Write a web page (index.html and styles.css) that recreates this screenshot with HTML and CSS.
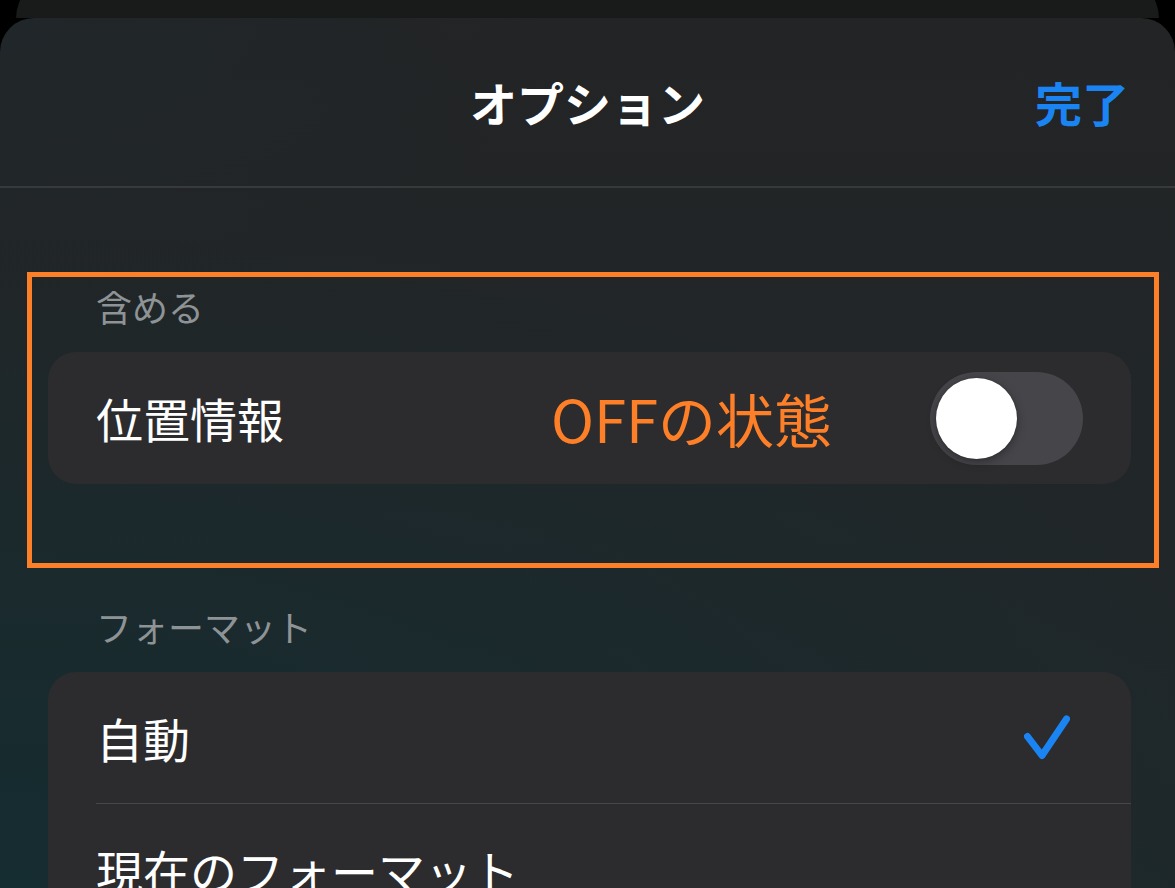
FILE: index.html
```html
<!DOCTYPE html>
<html lang="ja">
<head>
<meta charset="UTF-8">
<meta name="viewport" content="width=device-width, initial-scale=1.0">
<title>オプション</title>
<link rel="stylesheet" href="styles.css">
</head>
<body>

<div class="screen">
  <div class="back-sheet"></div>

  <div class="sheet">
    <header class="sheet-header">
      <span></span>
      <h1 class="title">オプション</h1>
      <button class="done" type="button">完了</button>
    </header>

    <div class="content">
      <div class="highlight">
        <section class="group">
          <h2 class="group-label">含める</h2>
          <div class="card">
            <div class="row row-switch">
              <span class="row-label">位置情報</span>
              <span class="note">OFFの状態</span>
              <span class="switch"><span class="knob"></span></span>
            </div>
          </div>
        </section>
      </div>

      <section class="group group-format">
        <h2 class="group-label">フォーマット</h2>
        <div class="card">
          <div class="row row-option">
            <span class="row-label">自動</span>
            <svg class="check" width="46" height="45" viewBox="0 0 46 45">
              <polyline points="3.5,21.5 18,40.5 42.5,4" fill="none" stroke="#1a84f2" stroke-width="7" stroke-linecap="round" stroke-linejoin="round"/>
            </svg>
          </div>
          <div class="row row-option">
            <span class="row-label">現在のフォーマット</span>
          </div>
        </div>
      </section>
    </div>
  </div>
</div>

</body>
</html>
```

FILE: styles.css
```css
body {
  margin: 0;
  padding: 0;
  background-color: #000;
  font-family: "Noto Sans CJK JP", "Noto Sans", sans-serif;
  color: #fff;
}

.screen {
  width: 1175px;
  height: 888px;
  overflow: hidden;
}

.back-sheet {
  height: 40px;
  margin: -22px 16px 0;
  border-radius: 40px 40px 0 0;
  background-color: #191a1a;
}

.sheet {
  height: 870px;
  border-radius: 34px 34px 0 0;
  overflow: hidden;
  background:
    radial-gradient(140% 95% at 0% 100%, rgba(21, 44, 48, 1), rgba(21, 44, 48, 0) 80%),
    radial-gradient(60% 40% at 0% 0%, rgba(30, 40, 44, 0.6), rgba(30, 40, 44, 0) 80%),
    linear-gradient(180deg, #232425 0%, #212628 45%, #1f282b 100%);
}

/* header */
.sheet-header {
  display: grid;
  grid-template-columns: 1fr auto 1fr;
  align-items: center;
  height: 168px;
  border-bottom: 2px solid #38393b;
}

.title {
  margin: 0;
  font-size: 47px;
  font-weight: 700;
  line-height: 56px;
  color: #fff;
}

.done {
  justify-self: end;
  padding: 0 46px 0 0;
  border: none;
  background: none;
  font-family: inherit;
  font-size: 47px;
  font-weight: 700;
  line-height: 56px;
  color: #1a84f2;
}

/* content */
.content {
  padding-top: 84px;
}

.highlight {
  margin: 0 16px 0 27px;
  padding: 7px 23px 79px 16px;
  border: 5px solid #fd7f27;
}

.group-format {
  margin: 36px 44px 0 48px;
}

.group-label {
  margin: 0 0 24px;
  padding-left: 48px;
  font-size: 36px;
  font-weight: 400;
  line-height: 44px;
  color: #8e9396;
}

.card {
  border-radius: 28px;
  background-color: #2c2c2e;
  overflow: hidden;
}

.row {
  display: flex;
  align-items: center;
}

.row-label {
  font-size: 47px;
  line-height: 56px;
  color: #fff;
}

.row-switch {
  height: 132px;
  padding: 0 48px;
}

.row-option {
  height: 131px;
  margin-left: 48px;
  padding-right: 61px;
  justify-content: space-between;
  border-bottom: 1px solid #48484a;
}

.note {
  margin-left: auto;
  margin-right: 98px;
  font-size: 58px;
  font-weight: 400;
  line-height: 64px;
  color: #fd7f27;
}

/* switch */
.switch {
  display: flex;
  align-items: center;
  box-sizing: border-box;
  width: 153px;
  height: 93px;
  padding: 0 6px;
  border-radius: 47px;
  background-color: #46454a;
}

.knob {
  width: 81px;
  height: 81px;
  border-radius: 50%;
  background-color: #fff;
  box-shadow: 0 3px 10px rgba(0, 0, 0, 0.35), 0 0 2px rgba(0, 0, 0, 0.2);
}
```
